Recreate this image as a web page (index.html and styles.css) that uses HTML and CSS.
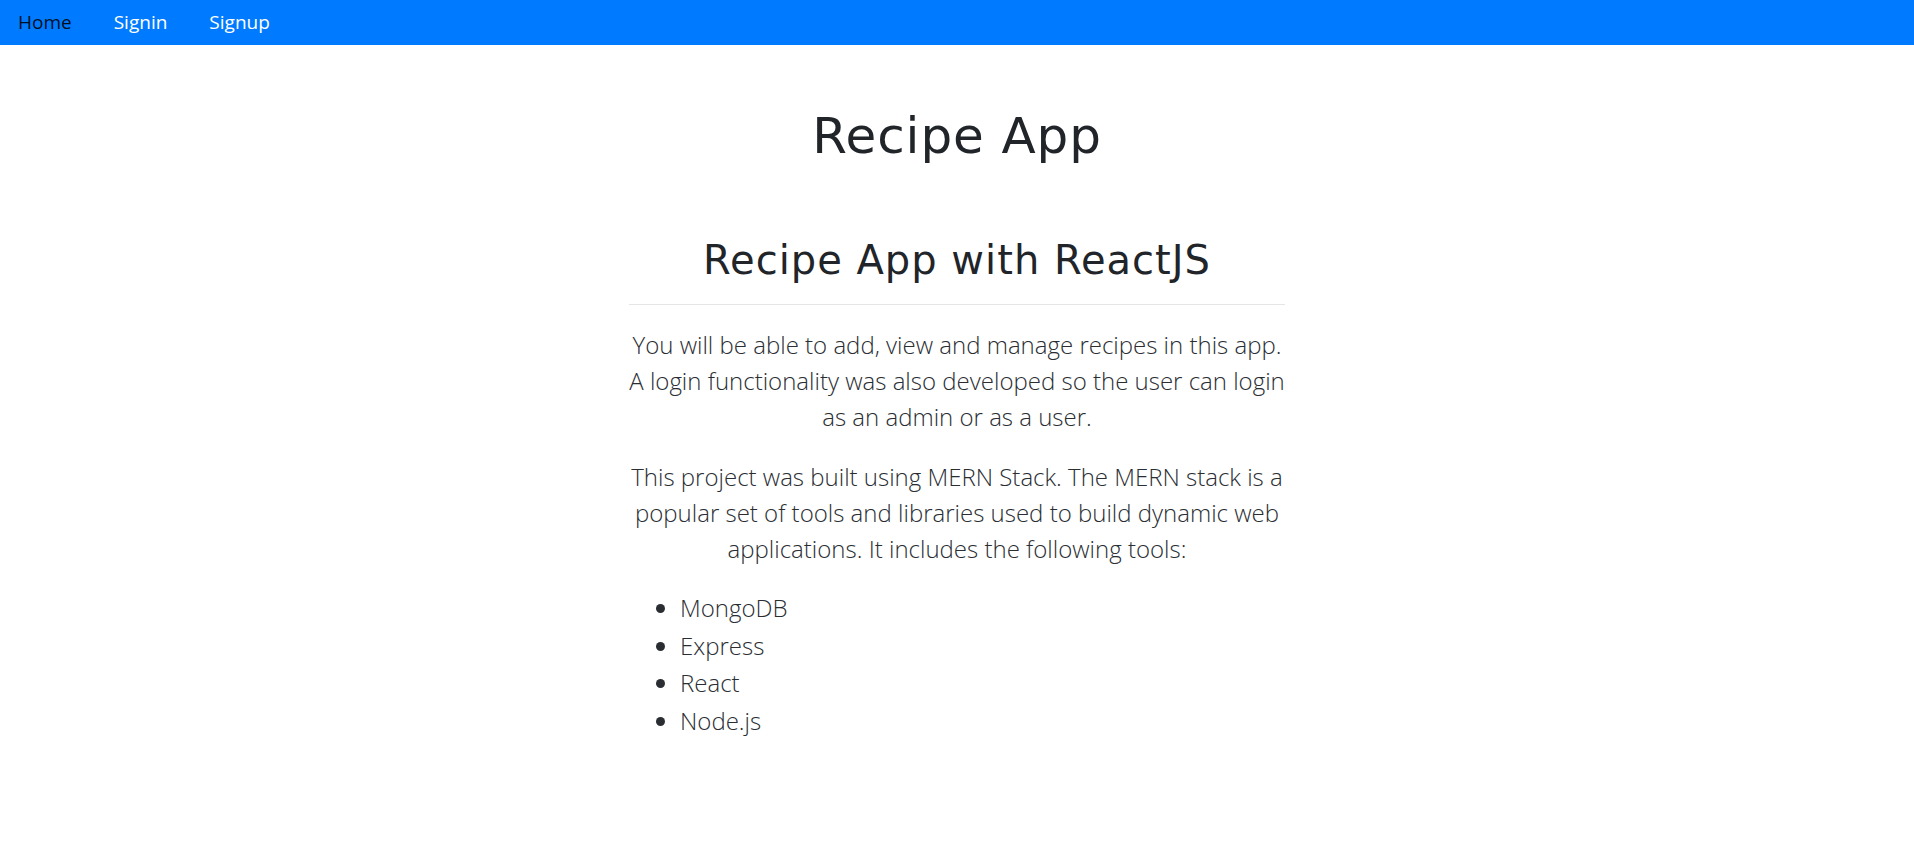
FILE: index.html
```html
<!DOCTYPE html>
<html lang="en">
<head>
<meta charset="utf-8">
<title>Recipe App</title>
<link rel="stylesheet" href="styles.css">
</head>
<body>
<nav class="navbar">
  <a class="nav-link active" href="#">Home</a>
  <a class="nav-link" href="#">Signin</a>
  <a class="nav-link" href="#">Signup</a>
</nav>
<main class="main">
  <h1 class="title">Recipe App</h1>
  <section class="about">
    <h2 class="about-heading">Recipe App with ReactJS</h2>
    <p class="about-text">You will be able to add, view and manage recipes in this app. A login functionality was also developed so the user can login as an admin or as a user.</p>
    <p class="about-text">This project was built using MERN Stack. The MERN stack is a popular set of tools and libraries used to build dynamic web applications. It includes the following tools:</p>
    <ul class="tools">
      <li>MongoDB</li>
      <li>Express</li>
      <li>React</li>
      <li>Node.js</li>
    </ul>
  </section>
</main>
</body>
</html>
```
FILE: styles.css
```css
* { box-sizing: border-box; }
html, body { margin: 0; padding: 0; background: #fff; }
body { font-family: "Open Sans", "Noto Sans", sans-serif; color: #212529; }

.navbar {
  height: 45px;
  background: #007bff;
  display: flex;
  align-items: center;
  gap: 42px;
  padding-left: 18px;
}
.nav-link {
  font-family: "Open Sans", "Noto Sans", sans-serif;
  font-size: 19px;
  color: #ffffff;
  text-decoration: none;
  line-height: 1;
}
.nav-link.active { color: rgba(0, 0, 0, 0.9); }

.main { display: flex; flex-direction: column; align-items: center; }

.title {
  font-family: "DejaVu Sans", sans-serif;
  font-weight: normal;
  font-size: 50px;
  line-height: 1.2;
  letter-spacing: 0.9px;
  margin: 61px 0 0;
  color: #212529;
}

.about {
  width: 656px;
  margin-top: 70px;
  text-align: center;
}
.about-heading {
  font-family: "DejaVu Sans", sans-serif;
  font-weight: normal;
  font-size: 40px;
  line-height: 1.2;
  letter-spacing: 1px;
  margin: 0;
  padding-bottom: 20px;
  border-bottom: 1px solid #e5e5e5;
  color: #212529;
}
.about-text {
  font-family: "Open Sans", sans-serif;
  font-weight: 300;
  font-size: 24px;
  line-height: 36px;
  margin: 22px 0 0;
  color: #2a2e33;
}
.about-text + .about-text { margin-top: 24px; }
.tools {
  text-align: left;
  font-family: "Open Sans", sans-serif;
  font-weight: 300;
  font-size: 24px;
  line-height: 37.5px;
  margin: 22px 0 0;
  padding-left: 51px;
  color: #2a2e33;
}
```
